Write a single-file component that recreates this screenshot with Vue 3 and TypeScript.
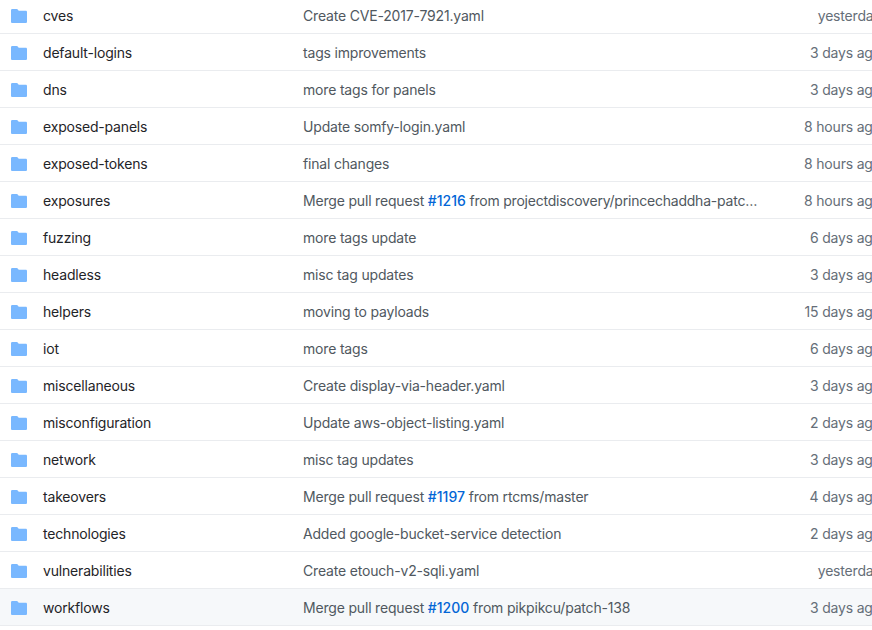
<script setup lang="ts">
interface Entry { name: string; message: string; pr?: string; rest?: string; age: string; long?: boolean }

const entries: Entry[] = [
  { name: 'cves', message: 'Create CVE-2017-7921.yaml', age: 'yesterday' },
  { name: 'default-logins', message: 'tags improvements', age: '3 days ago' },
  { name: 'dns', message: 'more tags for panels', age: '3 days ago' },
  { name: 'exposed-panels', message: 'Update somfy-login.yaml', age: '8 hours ago' },
  { name: 'exposed-tokens', message: 'final changes', age: '8 hours ago' },
  { name: 'exposures', message: 'Merge pull request ', pr: '#1216', rest: ' from projectdiscovery/princechaddha-patc…', age: '8 hours ago', long: true },
  { name: 'fuzzing', message: 'more tags update', age: '6 days ago' },
  { name: 'headless', message: 'misc tag updates', age: '3 days ago' },
  { name: 'helpers', message: 'moving to payloads', age: '15 days ago' },
  { name: 'iot', message: 'more tags', age: '6 days ago' },
  { name: 'miscellaneous', message: 'Create display-via-header.yaml', age: '3 days ago' },
  { name: 'misconfiguration', message: 'Update aws-object-listing.yaml', age: '2 days ago' },
  { name: 'network', message: 'misc tag updates', age: '3 days ago' },
  { name: 'takeovers', message: 'Merge pull request ', pr: '#1197', rest: ' from rtcms/master', age: '4 days ago' },
  { name: 'technologies', message: 'Added google-bucket-service detection', age: '2 days ago' },
  { name: 'vulnerabilities', message: 'Create etouch-v2-sqli.yaml', age: 'yesterday' },
  { name: 'workflows', message: 'Merge pull request ', pr: '#1200', rest: ' from pikpikcu/patch-138', age: '3 days ago' },
]
</script>

<template>
  <div class="viewport">
    <div class="list">
      <div v-for="(e, i) in entries" :key="e.name" class="row" :class="{ active: i === entries.length - 1 }">
        <svg class="icon" viewBox="0 0 16 16" width="16" height="16" aria-hidden="true">
          <path d="M1.3 1A1.300 1.300 0 000 2.300v11.400C0 14.450.55 15 1.300 15h13.400c.75 0 1.300-.55 1.300-1.300V4C16 3.250 15.450 2.700 14.700 2.700H7.900a.5.5 0 01-.4-.2l-.7-.9C6.500 1.200 6.100 1 5.600 1z" />
        </svg>
        <span class="name">{{ e.name }}</span>
        <span class="message">{{ e.message }}<a v-if="e.pr" class="pr">{{ e.pr }}</a><span :class="{ long: e.long }">{{ e.rest }}</span></span>
        <span class="age">{{ e.age }}</span>
      </div>
    </div>
  </div>
</template>

<style>
body { background: #fff; }
</style>

<style scoped>
.viewport { width: 100%; height: 630px; overflow: hidden; }
.list { width: 881px; font: 14px/20px Inter, "Liberation Sans", sans-serif; letter-spacing: -0.18px; white-space: pre; }
.row { box-sizing: border-box; height: 37px; display: flex; align-items: center; padding: 2px 0 0 11px; border-bottom: 1px solid #eaecef; }
.row:first-child { height: 34px; padding-top: 0; padding-bottom: 1px; }
.icon { flex: none; fill: #79b8ff; margin-right: 16px; }
.name { width: 260px; flex: none; color: #1f2428; }
.message { flex: 1; color: #505860; }
.age { flex: none; color: #656e78; }
.pr { color: #0366d6; font-weight: 500; letter-spacing: 0; }
.long { letter-spacing: -0.22px; }
.active { background: #f6f8fa; }
</style>
